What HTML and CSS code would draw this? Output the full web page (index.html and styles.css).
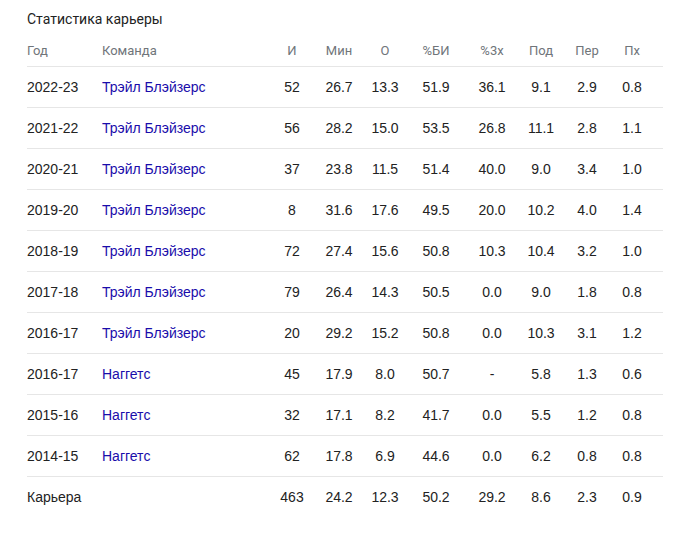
FILE: index.html
```html
<!DOCTYPE html>
<html lang="ru">
<head>
<meta charset="utf-8">
<link rel="stylesheet" href="styles.css">
</head>
<body>
<div class="card">
  <div class="title">Статистика карьеры</div>
  <div class="row head">
    <div class="l">Год</div><div class="l">Команда</div><div>И</div><div>Мин</div><div>О</div><div>%БИ</div><div>%3х</div><div>Под</div><div>Пер</div><div>Пх</div>
  </div>
  <div class="row">
    <div class="l">2022-23</div><div class="l team">Трэйл Блэйзерс</div><div>52</div><div>26.7</div><div>13.3</div><div>51.9</div><div>36.1</div><div>9.1</div><div>2.9</div><div>0.8</div>
  </div>
  <div class="row">
    <div class="l">2021-22</div><div class="l team">Трэйл Блэйзерс</div><div>56</div><div>28.2</div><div>15.0</div><div>53.5</div><div>26.8</div><div>11.1</div><div>2.8</div><div>1.1</div>
  </div>
  <div class="row">
    <div class="l">2020-21</div><div class="l team">Трэйл Блэйзерс</div><div>37</div><div>23.8</div><div>11.5</div><div>51.4</div><div>40.0</div><div>9.0</div><div>3.4</div><div>1.0</div>
  </div>
  <div class="row">
    <div class="l">2019-20</div><div class="l team">Трэйл Блэйзерс</div><div>8</div><div>31.6</div><div>17.6</div><div>49.5</div><div>20.0</div><div>10.2</div><div>4.0</div><div>1.4</div>
  </div>
  <div class="row">
    <div class="l">2018-19</div><div class="l team">Трэйл Блэйзерс</div><div>72</div><div>27.4</div><div>15.6</div><div>50.8</div><div>10.3</div><div>10.4</div><div>3.2</div><div>1.0</div>
  </div>
  <div class="row">
    <div class="l">2017-18</div><div class="l team">Трэйл Блэйзерс</div><div>79</div><div>26.4</div><div>14.3</div><div>50.5</div><div>0.0</div><div>9.0</div><div>1.8</div><div>0.8</div>
  </div>
  <div class="row">
    <div class="l">2016-17</div><div class="l team">Трэйл Блэйзерс</div><div>20</div><div>29.2</div><div>15.2</div><div>50.8</div><div>0.0</div><div>10.3</div><div>3.1</div><div>1.2</div>
  </div>
  <div class="row">
    <div class="l">2016-17</div><div class="l team">Наггетс</div><div>45</div><div>17.9</div><div>8.0</div><div>50.7</div><div>-</div><div>5.8</div><div>1.3</div><div>0.6</div>
  </div>
  <div class="row">
    <div class="l">2015-16</div><div class="l team">Наггетс</div><div>32</div><div>17.1</div><div>8.2</div><div>41.7</div><div>0.0</div><div>5.5</div><div>1.2</div><div>0.8</div>
  </div>
  <div class="row">
    <div class="l">2014-15</div><div class="l team">Наггетс</div><div>62</div><div>17.8</div><div>6.9</div><div>44.6</div><div>0.0</div><div>6.2</div><div>0.8</div><div>0.8</div>
  </div>
  <div class="row total">
    <div class="l">Карьера</div><div class="l"></div><div>463</div><div>24.2</div><div>12.3</div><div>50.2</div><div>29.2</div><div>8.6</div><div>2.3</div><div>0.9</div>
  </div>
</div>
</body>
</html>
```

FILE: styles.css
```css
html, body {
  margin: 0;
  padding: 0;
  background: #ffffff;
}
.card {
  padding: 9px 0 0 27px;
  width: 636px;
}
.title {
  font-family: Roboto, "Liberation Sans", sans-serif;
  font-size: 14px;
  line-height: 20px;
  color: #222222;
  margin-bottom: 7px;
}
.row {
  display: grid;
  grid-template-columns: 75px 166px 48px 46px 46px 56px 56px 42px 50px 40px;
  padding-right: 11px;
  height: 40px;
  line-height: 40px;
  border-bottom: 1px solid #e6e6e6;
  font-family: "Liberation Sans", Arial, sans-serif;
  font-size: 14px;
  color: #222222;
  text-align: center;
  white-space: nowrap;
}
.row.head {
  height: 30px;
  line-height: 30px;
  font-family: Roboto, "Liberation Sans", sans-serif;
  font-size: 13px;
  color: #70757a;
}
.row.total {
  border-bottom: none;
}
.l {
  text-align: left;
}
.team {
  color: #1a0dab;
}
```
